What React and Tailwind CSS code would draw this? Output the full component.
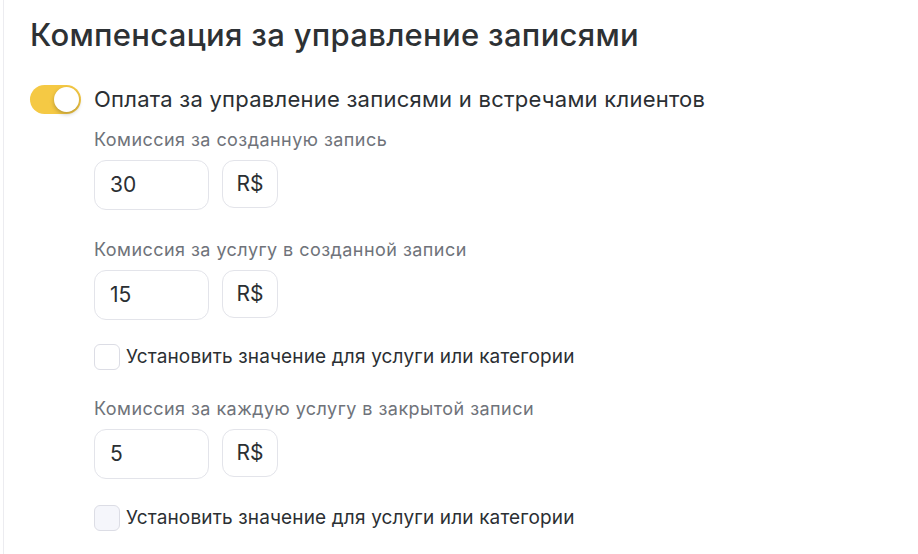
import React, { useState } from "react";

function Toggle({ on, onChange }) {
  return (
    <button
      onClick={() => onChange(!on)}
      className={`relative w-[51px] h-[29px] rounded-full shrink-0 ${on ? "bg-[#f5c944]" : "bg-gray-300"}`}
    >
      <span
        className={`absolute top-[2px] w-[25px] h-[25px] rounded-full bg-white shadow-[0_2px_4px_rgba(0,0,0,0.25)] ${on ? "left-[24px]" : "left-[2px]"}`}
      />
    </button>
  );
}

function AmountField({ label, value }) {
  return (
    <div className="flex flex-col">
      <div className="text-[18px] leading-[20px] tracking-[0.45px] text-[#6f737a]">{label}</div>
      <div className="flex gap-[13px] mt-[10px]">
        <div className="w-[115px] h-[50px] rounded-[12px] border border-[#e3e4ea] flex items-center px-[15px] text-[21px] text-[#2b2f33]">
          {value}
        </div>
        <div className="w-[56px] h-[48px] rounded-[12px] border border-[#e3e4ea] flex items-center justify-center text-[21px] text-[#2b2f33]">
          R$
        </div>
      </div>
    </div>
  );
}

function Check({ label, tinted }) {
  const [checked, setChecked] = useState(false);
  return (
    <label className="flex items-center gap-[6px] cursor-pointer">
      <span
        onClick={() => setChecked(!checked)}
        className={`w-[26px] h-[26px] rounded-[6px] border border-[#dcdde5] ${tinted ? "bg-[#f5f6fb]" : "bg-white"}`}
      />
      <span className="text-[19px] leading-[26px] tracking-[0.15px] text-[#2b2f33]">{label}</span>
    </label>
  );
}

export default function App() {
  const [enabled, setEnabled] = useState(true);

  return (
    <div
      className="w-[918px] h-[554px] bg-white overflow-hidden"
      style={{ fontFamily: "Inter, 'Noto Sans', sans-serif" }}
    >
      <div className="ml-[3px] h-full border-l border-[#ececf0] pl-[26px] pt-[16px]">
        <h1 className="text-[31px] leading-[38px] tracking-[0.3px] font-medium text-[#2d3134]">
          Компенсация за управление записями
        </h1>

        <div className="flex items-center gap-[13px] mt-[31px]">
          <Toggle on={enabled} onChange={setEnabled} />
          <span className="text-[22px] leading-[29px] tracking-[0.25px] text-[#2b2f33]">
            Оплата за управление записями и встречами клиентов
          </span>
        </div>

        <div className="ml-[64px] mt-[16px] flex flex-col">
          <AmountField label="Комиссия за созданную запись" value="30" />
          <div className="mt-[30px]">
            <AmountField label="Комиссия за услугу в созданной записи" value="15" />
          </div>
          <div className="mt-[24px]">
            <Check label="Установить значение для услуги или категории" />
          </div>
          <div className="mt-[29px]">
            <AmountField label="Комиссия за каждую услугу в закрытой записи" value="5" />
          </div>
          <div className="mt-[26px]">
            <Check label="Установить значение для услуги или категории" tinted />
          </div>
        </div>
      </div>
    </div>
  );
}
